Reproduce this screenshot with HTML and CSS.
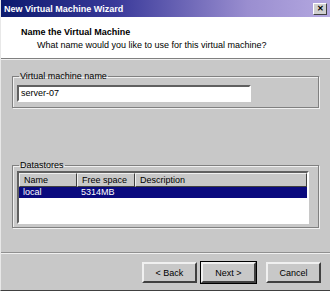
FILE: index.html
```html
<!DOCTYPE html>
<html lang="en">
<head>
    <meta charset="UTF-8">
    <title>New Virtual Machine Wizard</title>
    <link rel="stylesheet" href="styles.css">
</head>
<body>
    <div class="window">
        <div class="titlebar">
            <span>New Virtual Machine Wizard</span>
            <span class="close">&#x2715;</span>
        </div>

        <div class="header">
            <h1>Name the Virtual Machine</h1>
            <p>What name would you like to use for this virtual machine?</p>
        </div>

        <div class="content">
            <fieldset class="group group-name">
                <legend>Virtual machine name</legend>
                <div class="textbox">server-07</div>
            </fieldset>

            <fieldset class="group group-stores">
                <legend>Datastores</legend>
                <div class="listview">
                    <div class="row head">
                        <span class="col c1">Name</span>
                        <span class="col c2">Free space</span>
                        <span class="col c3">Description</span>
                    </div>
                    <div class="row selected">
                        <span class="col c1">local</span>
                        <span class="col c2">5314MB</span>
                        <span class="col c3"></span>
                    </div>
                </div>
            </fieldset>
        </div>

        <div class="footer">
            <button class="btn">&lt; Back</button>
            <button class="btn default">Next &gt;</button>
            <button class="btn cancel">Cancel</button>
        </div>
    </div>
</body>
</html>
```

FILE: styles.css
```css
/* Ventana de dialogo estilo clasico */
body {
    margin: 0;
    padding: 0;
    background: #c8c8c8;
    font-family: 'Liberation Sans', Arial, sans-serif;
    font-size: 9px;
    color: #000;
}

.window {
    width: 330px;
    height: 291px;
    box-sizing: border-box;
    border-left: 1px solid #e8e8e8;
    border-bottom: 1px solid #404040;
    display: flex;
    flex-direction: column;
}

/* Barra de titulo */
.titlebar {
    height: 17px;
    flex: none;
    display: flex;
    align-items: center;
    justify-content: space-between;
    padding: 0 3px 0 3px;
    background: linear-gradient(to right, #0c1a6e 0%, #3a3a9a 35%, #9a8ed0 75%, #b4a8e0 100%);
    color: #fff;
    font-weight: bold;
    font-size: 9px;
}

.close {
    width: 14px;
    height: 12px;
    background: #d0d0d0;
    color: #000;
    font-size: 8px;
    line-height: 10px;
    text-align: center;
    border: 1px solid;
    border-color: #fff #404040 #404040 #fff;
    box-sizing: border-box;
    font-weight: bold;
}

/* Cabecera blanca */
.header {
    height: 42px;
    flex: none;
    box-sizing: border-box;
    background: #fff;
    padding: 10px 0 0 20px;
    border-bottom: 1px solid #808080;
    box-shadow: 0 1px 0 #f0f0f0;
}

.header h1 {
    margin: 0;
    font-size: 9px;
    font-weight: bold;
    line-height: 11px;
}

.header p {
    margin: 2px 0 0 16px;
    line-height: 11px;
}

.content {
    padding: 12px 11px 0 11px;
    flex: 1;
}

/* Grupos */
.group {
    margin: 0;
    padding: 0 4px;
    border: 1px solid #808080;
    box-shadow: 1px 1px 0 #f0f0f0, inset 1px 1px 0 #f0f0f0;
}

.group legend {
    padding: 0 1px;
    margin-left: 2px;
    line-height: 10px;
}

.group-name {
    height: 37px;
    box-sizing: border-box;
}

.group-stores {
    margin-top: 52px;
    height: 68px;
    box-sizing: border-box;
}

.textbox {
    width: 234px;
    height: 17px;
    box-sizing: border-box;
    margin-top: 4px;
    background: #fff;
    border: 2px solid;
    border-color: #606060 #fff #fff #606060;
    padding: 1px 2px;
    line-height: 11px;
}

.listview {
    margin-top: 1px;
    height: 53px;
    box-sizing: border-box;
    margin-right: 5px;
    background: #fff;
    border: 2px solid;
    border-color: #606060 #fff #fff #606060;
}

.row {
    display: flex;
    height: 11px;
    line-height: 11px;
    white-space: nowrap;
}

.head {
    height: 14px;
    line-height: 12px;
}

.head .col {
    background: #c8c8c8;
    box-sizing: border-box;
    border: 1px solid;
    border-color: #f0f0f0 #404040 #404040 #f0f0f0;
    padding-left: 4px;
}

.col.c1 { width: 58px; padding-left: 4px; box-sizing: border-box; }
.col.c2 { width: 58px; padding-left: 4px; box-sizing: border-box; }
.col.c3 { flex: 1; }

.selected {
    background: #0a0a7e;
    color: #fff;
}

/* Botones inferiores */
.footer {
    flex: none;
    height: 38px;
    box-sizing: border-box;
    border-top: 1px solid #909090;
    box-shadow: inset 0 1px 0 #f0f0f0;
    display: flex;
    justify-content: flex-end;
    align-items: flex-start;
    padding: 9px 9px 0 0;
    gap: 3px;
}

.btn {
    width: 55px;
    height: 21px;
    font-family: 'Liberation Sans', Arial, sans-serif;
    font-size: 9px;
    background: #c8c8c8;
    border: 2px solid;
    border-color: #f0f0f0 #404040 #404040 #f0f0f0;
    padding: 0;
}

.btn.default {
    outline: 1px solid #000;
    margin-left: 1px;
}

.btn.cancel {
    margin-left: 7px;
}
```
